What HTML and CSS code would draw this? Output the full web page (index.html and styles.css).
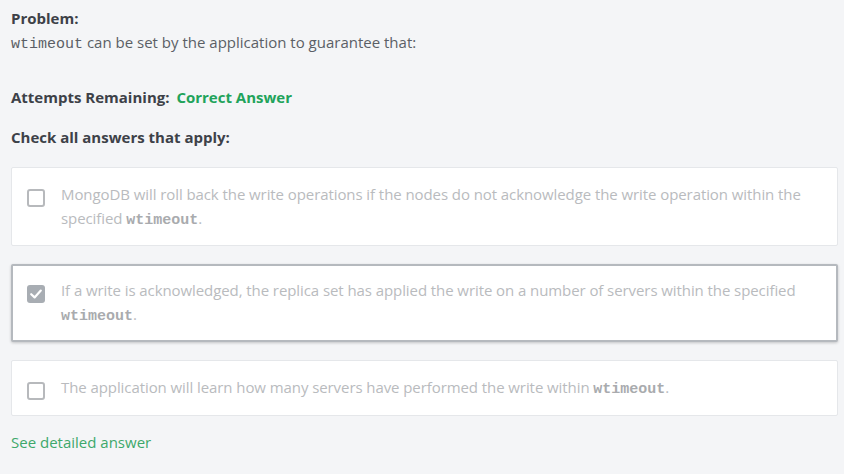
FILE: index.html
```html
<!DOCTYPE html>
<html>
<head>
<meta charset="utf-8">
<link rel="stylesheet" href="styles.css">
</head>
<body>
<div class="page">
  <div class="problem">
    <div class="label">Problem:</div>
    <div class="question"><code>wtimeout</code> can be set by the application to guarantee that:</div>
  </div>
  <div class="attempts"><span class="label">Attempts Remaining:</span> <span class="correct">Correct Answer</span></div>
  <div class="instructions">Check all answers that apply:</div>
  <div class="options">
    <div class="option">
      <span class="box"></span>
      <div class="text">MongoDB will roll back the write operations if the nodes do not acknowledge the write operation within the specified <code>wtimeout</code>.</div>
    </div>
    <div class="option selected">
      <span class="box checked"><svg viewBox="0 0 18 18" width="18" height="18"><path d="M4.2 9.2 L7.6 12.4 L13.8 5.6" fill="none" stroke="#fff" stroke-width="2.2" stroke-linecap="round" stroke-linejoin="round"/></svg></span>
      <div class="text">If a write is acknowledged, the replica set has applied the write on a number of servers within the specified <code>wtimeout</code>.</div>
    </div>
    <div class="option">
      <span class="box"></span>
      <div class="text">The application will learn how many servers have performed the write within <code>wtimeout</code>.</div>
    </div>
  </div>
  <a class="detail" href="#">See detailed answer</a>
</div>
</body>
</html>
```
FILE: styles.css
```css
html, body {
  margin: 0;
  padding: 0;
  background: #f4f5f7;
}
body {
  font-family: "Open Sans", "Liberation Sans", sans-serif;
  font-size: 15px;
  line-height: 24px;
  color: #3d4148;
}
.page {
  padding: 6px 6px 0 11px;
}
code {
  font-family: "Liberation Mono", monospace;
  font-size: 15px;
  line-height: 0;
}
.label {
  font-weight: 700;
  color: #3d4148;
}
.question {
  color: #5b5f66;
  line-height: 25px;
}
.attempts {
  margin-top: 30px;
}
.correct {
  font-weight: 700;
  color: #21a35b;
  margin-left: 3px;
}
.instructions {
  margin-top: 16px;
  font-weight: 700;
}
.options {
  margin-top: 18px;
  display: flex;
  flex-direction: column;
  gap: 18px;
}
.option {
  display: flex;
  align-items: flex-start;
  gap: 16px;
  background: #fff;
  border: 1px solid #e5e7ea;
  border-radius: 2px;
  padding: 14px 16px 15px 15px;
  color: #b9bbbe;
  letter-spacing: -0.08px;
}
.option code {
  font-weight: 700;
  color: #a9abae;
  letter-spacing: 0;
}
.option.selected {
  border: 2px solid #b5b9be;
  padding: 12px 16px 14px 14px;
  box-shadow: 0 1px 3px rgba(0,0,0,0.2);
}
.box {
  flex: none;
  width: 14px;
  height: 14px;
  border: 2px solid #b7b9bc;
  border-radius: 3px;
  margin-top: 7px;
  background: #fff;
}
.box.checked {
  width: 18px;
  height: 18px;
  border: 0;
  background: #a8adb3;
  display: flex;
}
.detail {
  display: block;
  margin-top: 14px;
  color: #3da86b;
  text-decoration: none;
}
```
